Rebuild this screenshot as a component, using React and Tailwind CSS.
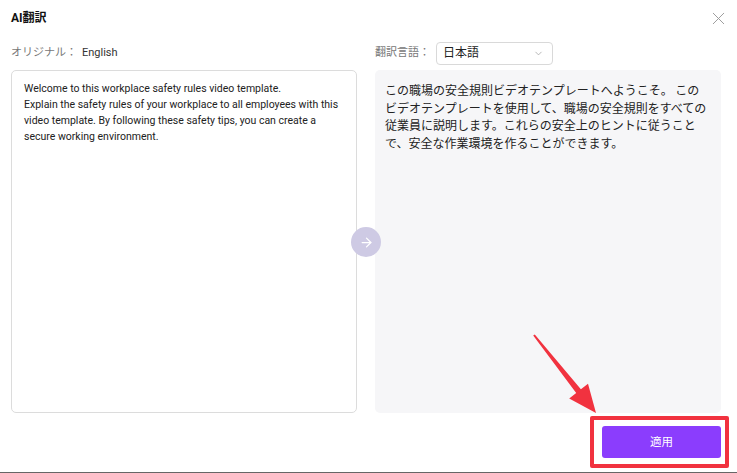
import { ChevronDown, X, ArrowRight } from 'lucide-react';

const jaLines = [
  'この職場の安全規則ビデオテンプレートへようこそ。 この',
  'ビデオテンプレートを使用して、職場の安全規則をすべての',
  '従業員に説明します。これらの安全上のヒントに従うこと',
  'で、安全な作業環境を作ることができます。',
];

const enLines = [
  'Welcome to this workplace safety rules video template.',
  'Explain the safety rules of your workplace to all employees with this',
  'video template. By following these safety tips, you can create a',
  'secure working environment.',
];

export default function App() {
  return (
    <div className="relative w-[737px] h-[473px] bg-white overflow-hidden font-['Roboto','Noto_Sans_CJK_JP',sans-serif] text-[#222]">
      {/* header */}
      <div className="flex items-center justify-between h-[36px] pl-[11px] pr-[8px]">
        <h1 className="text-[12px] font-bold text-[#111]">AI翻訳</h1>
        <X size={21} strokeWidth={1.1} className="text-[#9a9a9a]" />
      </div>

      {/* columns */}
      <div className="relative grid grid-cols-2 gap-[18px] pl-[11px] pr-[16px] mt-[5px]">
        <div className="flex flex-col">
          <div className="flex items-center h-[24px] text-[11px]">
            <span className="text-[#777]">オリジナル：</span>
            <span className="ml-[5px] text-[#333]">English</span>
          </div>
          <div className="mt-[5px] h-[343px] rounded-[5px] border border-[#dcdcdc] bg-white px-[12px] py-[10px] text-[10.5px] leading-[16px] text-[#222]">
            {enLines.map((l) => (
              <div key={l} className="whitespace-nowrap">{l}</div>
            ))}
          </div>
        </div>

        <div className="flex flex-col">
          <div className="flex items-center h-[24px] text-[11px]">
            <span className="text-[#777]">翻訳言語：</span>
            <div className="ml-[6px] flex items-center justify-between w-[117px] h-[23px] rounded-[4px] border border-[#d9d9d9] pl-[6px] pr-[8px] text-[12px] text-[#222]">
              <span>日本語</span>
              <ChevronDown size={11} strokeWidth={1.5} className="text-[#999]" />
            </div>
          </div>
          <div className="mt-[5px] h-[343px] rounded-[5px] bg-[#f6f6f8] px-[10px] py-[11px] text-[12px] leading-[17.5px] text-[#222] font-['Noto_Sans_CJK_JP',sans-serif]">
            {jaLines.map((l) => (
              <div key={l} className="whitespace-nowrap">{l}</div>
            ))}
          </div>
        </div>

        <div className="absolute left-[351px] top-[186px] flex items-center justify-center w-[30px] h-[30px] rounded-full bg-[#cecae4]">
          <ArrowRight size={15} strokeWidth={2} className="text-white" />
        </div>
      </div>

      {/* footer */}
      <div className="flex justify-end pr-[16px] mt-[13px]">
        <button className="w-[119px] h-[32px] rounded-[3px] bg-[#8b3dfd] text-white text-[11.5px] font-['Noto_Sans_CJK_JP',sans-serif]">
          適用
        </button>
      </div>

      {/* annotation */}
      <div className="absolute left-[590px] top-[416px] w-[139px] h-[52px] rounded-[2px] border-4 border-[#f1323f]" />
      <svg className="absolute left-0 top-0" width="737" height="473" viewBox="0 0 737 473">
        <polygon
          points="533.2,335.6 534.8,334.4 580.9,389.3 588,383.7 596,413 569.2,398.5 576.2,393.0"
          fill="#f1323f"
        />
      </svg>
      <div className="absolute left-0 bottom-0 w-full h-[1px] bg-[#666]" />
    </div>
  );
}
